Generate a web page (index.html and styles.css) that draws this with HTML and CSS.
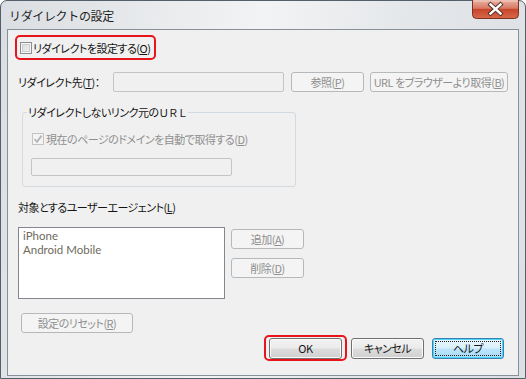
FILE: index.html
```html
<!DOCTYPE html>
<html lang="ja">
<head>
<meta charset="utf-8">
<title>リダイレクトの設定</title>
<link rel="stylesheet" href="styles.css">
</head>
<body>
<div class="window">
  <div class="titlebar">
    <span class="title">リダイレクトの設定</span>
    <div class="close">
      <svg width="47" height="19" viewBox="0 0 47 19">
        <defs>
          <linearGradient id="cg" x1="0" y1="0" x2="0" y2="1">
            <stop offset="0" stop-color="#e9b2a4"/>
            <stop offset="0.45" stop-color="#d77a62"/>
            <stop offset="0.5" stop-color="#c8462a"/>
            <stop offset="1" stop-color="#d8694a"/>
          </linearGradient>
        </defs>
        <path d="M0.5 0 V14.5 Q0.5 18.5 4.5 18.5 H42.5 Q46.5 18.5 46.5 14.5 V0" fill="url(#cg)" stroke="#7a3325"/>
        <path d="M1.5 1 H45.5" stroke="#f3d0c6" stroke-width="1"/>
        <path d="M18.5 4.5 L28.5 13.5 M28.5 4.5 L18.5 13.5" stroke="#4a2a22" stroke-width="4.2" stroke-linecap="square"/>
        <path d="M18.5 4.5 L28.5 13.5 M28.5 4.5 L18.5 13.5" stroke="#ffffff" stroke-width="2.4" stroke-linecap="square"/>
      </svg>
    </div>
  </div>
  <div class="client">
    <div class="hl hl-opt">
      <div class="chk">
        <span class="box"></span>
        <span class="txt">リダイレクトを設定する(<u>O</u>)</span>
      </div>
    </div>

    <div class="dest">
      <span class="lbl">リダイレクト先(<u>T</u>)：</span>
      <div class="input dest-input"></div>
      <div class="btn dis w-ref">参照(<u>P</u>)</div>
      <div class="btn dis w-url">URL をブラウザーより取得(<u>B</u>)</div>
    </div>

    <fieldset class="group">
      <legend>リダイレクトしないリンク元の<span class="fw">ＵＲＬ</span></legend>
      <div class="chk dis">
        <span class="box checked">
          <svg width="10" height="10" viewBox="0 0 10 10"><path d="M1.5 5 L4 7.8 L8.6 1.6" fill="none" stroke="#b4b4b4" stroke-width="1.8"/></svg>
        </span>
        <span class="txt">現在のページのドメインを自動で取得する(<u>D</u>)</span>
      </div>
      <div class="input group-input"></div>
    </fieldset>

    <div class="ua-label">対象とするユーザーエージェント(<u>L</u>)</div>

    <div class="ua-row">
      <div class="listbox">
        <div class="item">iPhone</div>
        <div class="item">Android Mobile</div>
      </div>
      <div class="side">
        <div class="btn dis w-side">追加(<u>A</u>)</div>
        <div class="btn dis w-side">削除(<u>D</u>)</div>
      </div>
    </div>

    <div class="btn dis reset">設定のリセット(<u>R</u>)</div>

    <div class="footer">
      <div class="hl hl-ok"><div class="btn en w-ok">OK</div></div>
      <div class="btn en w-cancel">キャンセル</div>
      <div class="btn en def w-help"><span class="focus">ヘルプ</span></div>
    </div>
  </div>
</div>
</body>
</html>
```

FILE: styles.css
```css
html, body {
  margin: 0;
  padding: 0;
  background: #ffffff;
}
body {
  font-family: "Noto Sans CJK JP", "Noto Sans", sans-serif;
  font-size: 11px;
  letter-spacing: -0.5px;
  color: #141414;
  font-feature-settings: "palt";
  white-space: nowrap;
}
u { text-decoration: underline; text-underline-offset: 1px; }

.window {
  width: 526px;
  height: 379px;
  box-sizing: border-box;
  border: 1px solid #555f69;
  border-radius: 7px 7px 0 0;
  background: linear-gradient(100deg, #dadee2 0%, #eaecee 30%, #f2f3f4 45%, #e4e7ea 70%, #dcdfe3 100%);
  padding: 0 6px 2px 6px;
  display: flex;
  flex-direction: column;
}

.titlebar {
  height: 28px;
  display: flex;
  align-items: flex-start;
  justify-content: space-between;
  flex: none;
}
.title {
  margin: 7px 0 0 2px;
  font-size: 12px;
  line-height: 15px;
  color: #1e1e1e;
  font-feature-settings: normal;
  letter-spacing: -0.35px;
}
.close {
  width: 47px;
  height: 19px;
  margin-top: -1px;
}
.close svg { display: block; }

.client {
  flex: 1;
  border: 1px solid #87909a;
  background: #f0f0f0;
  display: flex;
  flex-direction: column;
  align-items: flex-start;
  min-height: 0;
}

.hl {
  box-sizing: border-box;
  border: 2px solid #e8141c;
  border-radius: 5px;
  display: flex;
  align-items: center;
}
.hl-opt {
  margin: 5px 0 0 7px;
  width: 141px;
  height: 25px;
  padding-left: 3px;
}

.chk {
  display: flex;
  align-items: center;
  line-height: 16px;
  height: 16px;
}
.chk .box {
  width: 12px;
  height: 12px;
  box-sizing: border-box;
  border: 1px solid #8e8f8f;
  background: linear-gradient(135deg, #d6d6d6, #f6f6f6);
  box-shadow: inset 0 0 0 1px #f4f4f4, inset 0 0 0 2px #cfcfcf;
  margin-right: 1px;
  flex: none;
}
.chk.dis { color: #8f8f8f; }
.chk .box.checked {
  border-color: #c4c4c4;
  background: #f4f4f4;
  box-shadow: none;
  display: flex;
  align-items: center;
  justify-content: center;
}
.chk .box.checked svg { display: block; }
.chk.dis .box { margin-right: 2px; }

.dest {
  margin: 12px 0 0 10px;
  display: flex;
  align-items: center;
  height: 20px;
}
.lbl {
  width: 95px;
  line-height: 16px;
}
.input {
  box-sizing: border-box;
  border: 1px solid #c2c4c6;
  border-radius: 2px;
  background: #f0f0f0;
}
.dest-input {
  width: 171px;
  height: 20px;
}

.btn {
  box-sizing: border-box;
  height: 20px;
  border-radius: 3px;
  display: flex;
  align-items: center;
  justify-content: center;
  line-height: 16px;
}
.btn.dis {
  border: 1px solid #b6b9bc;
  background: #f4f4f4;
  color: #8f8f8f;
}
.btn.en {
  border: 1px solid #707070;
  background: linear-gradient(#f2f2f2 0%, #ebebeb 48%, #dddddd 52%, #cfcfcf 100%);
  box-shadow: inset 0 0 0 1px #fbfbfb;
  color: #141414;
  height: 21px;
}
.btn.def {
  border-color: #3c7fb1;
  background: linear-gradient(#eaf6fd 0%, #d9f0fc 48%, #bee6fd 52%, #a7d9f5 100%);
  box-shadow: inset 0 0 0 1px #48d8fb;
}
.btn .focus {
  flex: 1;
  align-self: stretch;
  margin: 2px;
  border: 1px dotted #222;
  display: flex;
  align-items: center;
  justify-content: center;
}
.w-ref { width: 73px; margin-left: 7px; }
.w-url { width: 138px; margin-left: 6px; }

.group {
  margin: 13px 0 0 14px;
  width: 274px;
  box-sizing: border-box;
  border: 1px solid #d3dbe1;
  border-radius: 3px;
  padding: 11px 0 10px 9px;
  min-width: 0;
}
.group legend {
  margin-left: -5px;
  padding: 0 1px;
  line-height: 14px;
  color: #141414;
}
.fw {
  font-feature-settings: normal;
  letter-spacing: -1px;
  font-size: 10.5px;
}
.group-input {
  margin: 11px 0 0 -1px;
  width: 201px;
  height: 18px;
}

.ua-label {
  margin: 13px 0 0 10px;
  line-height: 14px;
}

.ua-row {
  margin: 13px 0 0 10px;
  display: flex;
  align-items: flex-start;
}
.listbox {
  width: 207px;
  height: 72px;
  box-sizing: border-box;
  border: 1px solid #828790;
  background: #ffffff;
  padding: 1px 0 0 4px;
  color: #6e6a5c;
  font-family: Lato, "Noto Sans", sans-serif;
  font-size: 11.5px;
  letter-spacing: 0;
  line-height: 14px;
}
.side {
  margin: 2px 0 0 6px;
  display: flex;
  flex-direction: column;
  gap: 9px;
}
.w-side { width: 73px; }

.reset {
  margin: 14px 0 0 13px;
  width: 112px;
}

.footer {
  align-self: stretch;
  margin-top: 2px;
  padding-right: 14px;
  display: flex;
  justify-content: flex-end;
  align-items: center;
}
.hl-ok {
  width: 83px;
  height: 26px;
  justify-content: center;
}
.w-ok { width: 73px; }
.w-cancel { width: 73px; margin-left: 4px; }
.w-help { width: 72px; margin-left: 8px; }
```
